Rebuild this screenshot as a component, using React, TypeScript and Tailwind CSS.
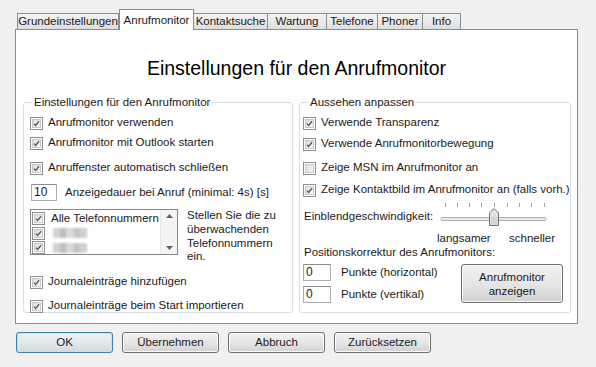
const font = { fontFamily: '"Liberation Sans", Arial, sans-serif' };

function Check({ checked = true }: { checked?: boolean }) {
  return (
    <div className="w-[13px] h-[13px] shrink-0 border border-[#8f8f8f] bg-white p-[1px]">
      <div className="w-full h-full border border-[#c9c9c9] bg-gradient-to-br from-[#dcdcdc] to-[#f8f8f8] flex items-center justify-center">
        {checked && (
          <svg width="9" height="9" viewBox="0 0 9 9">
            <path d="M1.2 4.6 L3.4 7 L7.8 1.6" fill="none" stroke="#555" strokeWidth="1.6" />
          </svg>
        )}
      </div>
    </div>
  );
}

function CheckRow({ label, checked = true, className = '' }: { label: string; checked?: boolean; className?: string }) {
  return (
    <div className={`flex items-center h-[20px] gap-[5px] whitespace-nowrap ${className}`}>
      <Check checked={checked} />
      <span>{label}</span>
    </div>
  );
}

function TextBox({ value, w }: { value: string; w: string }) {
  return (
    <div className={`${w} h-[17px] border border-[#abadb3] border-t-[#8a8c92] bg-white pl-[2px] leading-[15px] text-[12px]`}>
      {value}
    </div>
  );
}

function Button({ label, def = false, className = '' }: { label: string; def?: boolean; className?: string }) {
  return (
    <div
      className={`flex items-center justify-center rounded-[3px] border text-[#1a1a1a] ${
        def
          ? 'border-[#3c7fb1] bg-gradient-to-b from-[#eef3f6] via-[#e2e8ec] to-[#d3dade] shadow-[inset_0_0_0_1px_#bfe3f7]'
          : 'border-[#707070] bg-gradient-to-b from-[#f2f2f2] via-[#e6e6e6] to-[#d2d2d2] shadow-[inset_0_0_0_1px_#fbfbfb]'
      } ${className}`}
    >
      {label}
    </div>
  );
}

const tabs = [
  { label: 'Grundeinstellungen', w: 'w-[102px]' },
  { label: 'Anrufmonitor', w: 'w-[75px]', active: true },
  { label: 'Kontaktsuche', w: 'w-[75px]' },
  { label: 'Wartung', w: 'w-[60px]' },
  { label: 'Telefone', w: 'w-[52px]' },
  { label: 'Phoner', w: 'w-[46px]' },
  { label: 'Info', w: 'w-[39px]' },
];

function Slider() {
  const ticks = [444, 456, 468, 480, 493, 506, 518, 530, 543];
  return (
    <svg width="114" height="26" viewBox="436 202 114 26">
      {ticks.map((x) => (
        <line key={x} x1={x + 0.5} y1="203" x2={x + 0.5} y2="207" stroke="#a0a0a0" strokeWidth="1" />
      ))}
      <rect x="440" y="217.5" width="105" height="3" fill="#e7eaea" stroke="#b0b0b0" strokeWidth="1" rx="1" />
      <path d="M488.5 213 L493 208.5 L497.5 213 L497.5 225.5 L488.5 225.5 Z" fill="#e4e4e4" stroke="#707070" strokeWidth="1" />
      <path d="M489.5 217 L496.5 217 L496.5 224.5 L489.5 224.5 Z" fill="#d4d4d4" />
    </svg>
  );
}

function Blur() {
  return (
    <div className="w-[34px] h-[10px] flex blur-[1px]">
      <div className="w-[7px] h-full bg-[#d4d4d4]" />
      <div className="w-[6px] h-full bg-[#bdbdbd]" />
      <div className="w-[8px] h-full bg-[#d9d9d9]" />
      <div className="w-[6px] h-full bg-[#c4c4c4]" />
      <div className="w-[7px] h-full bg-[#d0d0d0]" />
    </div>
  );
}

export default function App() {
  return (
    <div className="w-[596px] h-[367px] bg-[#f0f0f0] text-[11.5px] text-[#1a1a1a] overflow-hidden" style={font}>
      {/* Tabs */}
      <div className="flex items-end pt-[9px] pl-[17px] h-[29px] whitespace-nowrap">
        {tabs.map((t) =>
          t.active ? (
            <div
              key={t.label}
              className={`${t.w} h-[21px] -mb-px relative z-10 bg-white border border-b-0 border-[#898c95] flex justify-center pt-[3px] leading-[14px]`}
            >
              {t.label}
            </div>
          ) : (
            <div
              key={t.label}
              className={`${t.w} h-[16px] border border-b-0 border-[#898c95] bg-gradient-to-b from-[#f4f4f4] to-[#dedede] flex justify-center leading-[15px] -ml-px first:ml-0`}
            >
              {t.label}
            </div>
          )
        )}
      </div>

      {/* Panel */}
      <div className="ml-[15px] w-[563px] h-[295px] border border-[#898c95] bg-white flex flex-col whitespace-nowrap">
        <div className="mt-[27px] text-center text-[19.5px] leading-[22px] text-black">
          Einstellungen für den Anrufmonitor
        </div>

        <div className="flex gap-[6px] ml-[7px] mt-[16px]">
          {/* Left group */}
          <fieldset className="w-[270px] h-[218px] border border-[#d5dfe5] rounded-[3px] pl-[6px]">
            <legend className="ml-[2px] px-[2px] leading-[14px]">Einstellungen für den Anrufmonitor</legend>
            <CheckRow label="Anrufmonitor verwenden" className="mt-[4px]" />
            <CheckRow label="Anrufmonitor mit Outlook starten" />
            <CheckRow label="Anruffenster automatisch schließen" className="mt-[5px]" />
            <div className="flex items-center gap-[8px] mt-[6px] ml-[1px]">
              <TextBox value="10" w="w-[26px]" />
              <span>Anzeigedauer bei Anruf (minimal: 4s) [s]</span>
            </div>
            <div className="flex mt-[8px] gap-[9px]">
              <div className="w-[148px] h-[46px] border border-[#828790] bg-white flex">
                <div className="flex-1 pt-[1px] pl-[1px]">
                  <div className="flex items-center h-[14.5px] gap-[6px]">
                    <Check />
                    <span>Alle Telefonnummern</span>
                  </div>
                  <div className="flex items-center h-[14.5px] gap-[8px]">
                    <Check />
                    <Blur />
                  </div>
                  <div className="flex items-center h-[14.5px] gap-[8px]">
                    <Check />
                    <Blur />
                  </div>
                </div>
                <div className="w-[17px] bg-[#f4f4f4] border-l border-[#e6e6e6] flex flex-col justify-between items-center py-[4px]">
                  <svg width="7" height="4" viewBox="0 0 7 4">
                    <path d="M0 4 L3.5 0 L7 4 Z" fill="#606060" />
                  </svg>
                  <svg width="7" height="4" viewBox="0 0 7 4">
                    <path d="M0 0 L3.5 4 L7 0 Z" fill="#606060" />
                  </svg>
                </div>
              </div>
              <div className="leading-[13.7px]">
                Stellen Sie die zu
                <br />
                überwachenden
                <br />
                Telefonnummern
                <br />
                ein.
              </div>
            </div>
            <CheckRow label="Journaleinträge hinzufügen" className="mt-[8px]" />
            <CheckRow label="Journaleinträge beim Start importieren" className="mt-[4px]" />
          </fieldset>

          {/* Right group */}
          <fieldset className="w-[270px] h-[218px] border border-[#d5dfe5] rounded-[3px] pl-[3px]">
            <legend className="ml-[5px] px-[2px] leading-[14px]">Aussehen anpassen</legend>
            <CheckRow label="Verwende Transparenz" className="mt-[4px]" />
            <CheckRow label="Verwende Anrufmonitorbewegung" className="mt-[1px]" />
            <CheckRow label="Zeige MSN im Anrufmonitor an" checked={false} className="mt-[4px]" />
            <CheckRow label="Zeige Kontaktbild im Anrufmonitor an (falls vorh.)" className="mt-[2px]" />
            <div className="flex items-center h-[26px] mt-[2px]">
              <span className="ml-[1px] w-[133px] pt-[3px]">Einblendgeschwindigkeit:</span>
              <Slider />
            </div>
            <div className="flex h-[14px] mt-[3px] leading-[14px]">
              <span className="ml-[134px] w-[72px]">langsamer</span>
              <span>schneller</span>
            </div>
            <div className="ml-[1px] h-[14px] leading-[14px]">Positionskorrektur des Anrufmonitors:</div>
            <div className="flex mt-[5px]">
              <div className="flex flex-col gap-[5px] w-[158px]">
                <div className="flex items-center gap-[10px]">
                  <TextBox value="0" w="w-[28px]" />
                  <span>Punkte (horizontal)</span>
                </div>
                <div className="flex items-center gap-[10px]">
                  <TextBox value="0" w="w-[28px]" />
                  <span>Punkte (vertikal)</span>
                </div>
              </div>
              <Button label="Anrufmonitor anzeigen" className="w-[102px] h-[39px] text-center leading-[14px] px-[12px] whitespace-normal" />
            </div>
          </fieldset>
        </div>
      </div>

      {/* Bottom buttons */}
      <div className="flex gap-[9px] ml-[16px] mt-[8px]">
        <Button label="OK" def className="w-[97px] h-[21px]" />
        <Button label="Übernehmen" className="w-[97px] h-[21px]" />
        <Button label="Abbruch" className="w-[97px] h-[21px]" />
        <Button label="Zurücksetzen" className="w-[97px] h-[21px]" />
      </div>
    </div>
  );
}
